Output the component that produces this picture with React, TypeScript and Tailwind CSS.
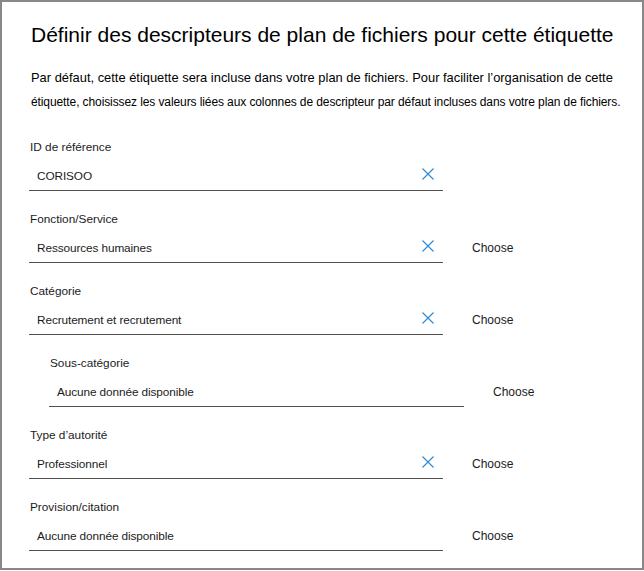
const font = { fontFamily: '"Liberation Sans", Arial, sans-serif' };

type Field = {
  label: string;
  value: string;
  clear?: boolean;
  choose?: boolean;
  nested?: boolean;
};

const fields: Field[] = [
  { label: 'ID de référence', value: 'CORISOO', clear: true },
  { label: 'Fonction/Service', value: 'Ressources humaines', clear: true, choose: true },
  { label: 'Catégorie', value: 'Recrutement et recrutement', clear: true, choose: true },
  { label: 'Sous-catégorie', value: 'Aucune donnée disponible', choose: true, nested: true },
  { label: "Type d’autorité", value: 'Professionnel', clear: true, choose: true },
  { label: 'Provision/citation', value: 'Aucune donnée disponible', choose: true },
];

function ClearIcon() {
  return (
    <svg width="12" height="12" viewBox="0 0 12 12" className="shrink-0">
      <path d="M0.5 0.5 L11.5 11.5 M11.5 0.5 L0.5 11.5" stroke="#2b88d8" strokeWidth="1.1" fill="none" />
    </svg>
  );
}

function DescriptorField({ field }: { field: Field }) {
  return (
    <div className={`flex ${field.nested ? 'ml-[20px]' : ''}`}>
      <div className={`flex flex-col gap-[4px] ${field.nested ? 'w-[415px]' : 'w-[414px]'}`}>
        <div className="h-[20px] pl-[1px] text-[11.8px] leading-[20px] text-[#1b1b1b]">{field.label}</div>
        <div className="flex h-[30px] items-center justify-between border-b border-[#505050] pl-[8px] pr-[9px]">
          <span className="text-[11.8px] leading-[20px] tracking-[-0.1px] text-[#1b1b1b]">{field.value}</span>
          {field.clear && (
            <span className="mb-[3px]">
              <ClearIcon />
            </span>
          )}
        </div>
      </div>
      {field.choose && (
        <div className="ml-[29px] flex h-[29px] items-center self-end pb-[1px] text-[12px] leading-[20px] text-[#1b1b1b]">
          Choose
        </div>
      )}
    </div>
  );
}

export default function App() {
  return (
    <div className="h-[571px] w-[644px] bg-white" style={font}>
      <div className="h-[570px] w-[644px] border-2 border-[#888888] pl-[27px] pt-[19px]">
        {/* Header */}
        <h1 className="pl-[2px] text-[21px] leading-[28px] text-black">
          Définir des descripteurs de plan de fichiers pour cette étiquette
        </h1>
        <p className="mt-[17px] pl-[2px] leading-[24px] text-black">
          <span className="block text-[12.9px]">
            Par défaut, cette étiquette sera incluse dans votre plan de fichiers. Pour faciliter l’organisation de cette
          </span>
          <span className="block whitespace-nowrap text-[12px] tracking-[-0.1px]">
            étiquette, choisissez les valeurs liées aux colonnes de descripteur par défaut incluses dans votre plan de fichiers.
          </span>
        </p>

        {/* Fields */}
        <div className="mt-[23px] flex flex-col gap-[18px]">
          {fields.map((f) => (
            <DescriptorField key={f.label} field={f} />
          ))}
        </div>
      </div>
    </div>
  );
}
